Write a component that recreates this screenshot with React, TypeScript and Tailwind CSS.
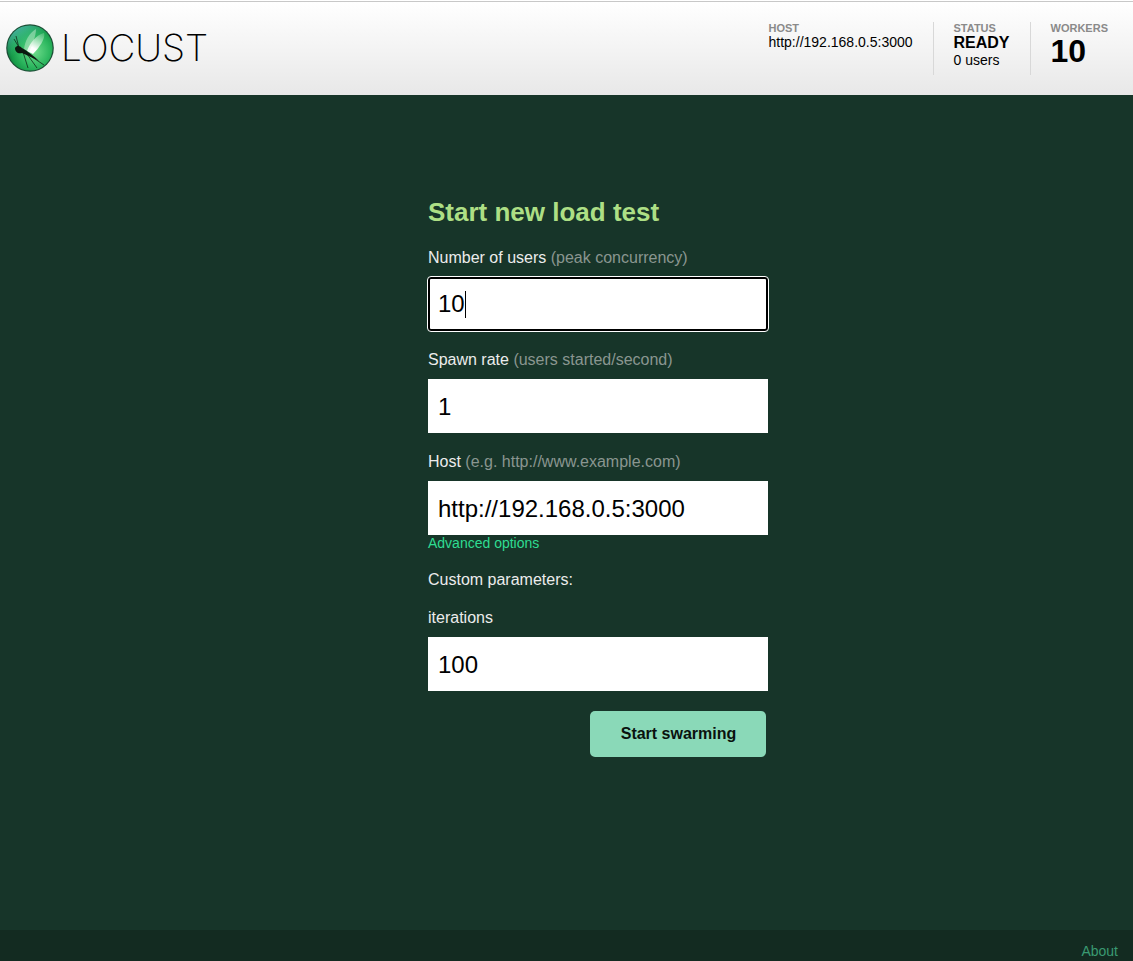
import React from 'react';

const Logo: React.FC = () => (
  <svg width="48" height="48" viewBox="0 0 48 48" className="shrink-0">
    <defs>
      <radialGradient id="globe" cx="0.6" cy="0.58" r="0.6">
        <stop offset="0" stopColor="#6fdc8c" />
        <stop offset="0.55" stopColor="#2eb860" />
        <stop offset="0.85" stopColor="#169a48" />
        <stop offset="1" stopColor="#0c7038" />
      </radialGradient>
      <linearGradient id="sky" x1="0.1" y1="0" x2="0.55" y2="0.7">
        <stop offset="0" stopColor="#5cc8c8" />
        <stop offset="0.7" stopColor="#3cc080" stopOpacity="0" />
      </linearGradient>
      <linearGradient id="wing" x1="0.8" y1="0" x2="0.3" y2="1">
        <stop offset="0" stopColor="#a8e4bc" stopOpacity="0.35" />
        <stop offset="0.75" stopColor="#ffffff" />
      </linearGradient>
    </defs>
    <circle cx="24" cy="24" r="23.8" fill="#1d4d36" />
    <circle cx="24" cy="24" r="22.6" fill="url(#globe)" />
    <circle cx="24" cy="24" r="22.6" fill="url(#sky)" />
    <path d="M21 27 C24 19 30 11 38 9 C40 14 33 24 27 30 Z" fill="url(#wing)" />
    <path d="M18 25 C19 17 23 9 30 5 C30 11 27 20 23 28 Z" fill="#d8f2dc" opacity="0.45" />
    <path d="M9 24 C11 21 14 22 16 24 C21 27 28 32 33 37 C27 34 21 31 16 29 C12 30 9 28 9 24 Z" fill="#0b1a10" />
    <path d="M10 12 L13 24 M8 15 L14 25 M17 28 L22 44 M21 30 L31 44 M26 33 L38 41" stroke="#0b1a10" strokeWidth="0.7" fill="none" />
  </svg>
);

const Stat: React.FC<{ label: string; children: React.ReactNode; className?: string }> = ({ label, children, className }) => (
  <div className={className}>
    <div className="text-[11px] leading-[12px] font-bold text-[#8a8a8a] uppercase">{label}</div>
    {children}
  </div>
);

const Field: React.FC<{ label: string; hint?: string; value: string; focused?: boolean }> = ({ label, hint, value, focused }) => (
  <div>
    <label className="block text-base leading-[20px] text-[#ececec]">
      {label} {hint && <span className="text-[#8a9690]">{hint}</span>}
    </label>
    <div
      className={
        'mt-[9px] h-[54px] w-[340px] bg-white flex items-center text-[24px] text-black ' +
        (focused ? 'rounded-[3px] outline-1 outline-white border-2 border-black pl-[8px] pr-[8px]' : 'px-[10px] pt-[2px]')
      }
    >
      <span>{value}</span>
      {focused && <span className="w-px h-[27px] bg-black" />}
    </div>
  </div>
);

const App: React.FC = () => {
  return (
    <div className="flex flex-col h-[961px] bg-[#173529] font-['Liberation_Sans',Arial,sans-serif] overflow-hidden">
      <header className="h-[95px] shrink-0 bg-white pt-px">
        <div className="h-full border-t border-[#c8c8c8] bg-gradient-to-b from-white to-[#e8e8e8] flex justify-between">
          <div className="flex items-center pl-[6px] pb-[2px] gap-[7px]">
            <Logo />
            <span className="font-['Inter',sans-serif] font-[200] text-[37px] tracking-[-0.1px] text-black">LOCUST</span>
          </div>
          <div className="flex pt-[20px] pr-[25px] text-black">
            <Stat label="Host" className="pr-[20px] h-[53px]">
              <div className="text-sm leading-[16px]">http://192.168.0.5:3000</div>
            </Stat>
            <Stat label="Status" className="border-l border-[#d8d8d8] pl-[20px] pr-[20px] h-[53px]">
              <div className="text-base leading-[18px] font-bold">READY</div>
              <div className="text-sm leading-[16px]">0 users</div>
            </Stat>
            <Stat label="Workers" className="border-l border-[#d8d8d8] pl-[20px] h-[53px]">
              <div className="text-[32px] leading-[34px] font-bold">10</div>
            </Stat>
          </div>
        </div>
      </header>

      <main className="flex-1 flex justify-center">
        <div className="w-[340px] pt-[102px] ml-[63px]">
          <h2 className="text-[26px] leading-[30px] font-bold text-[#addf85]">Start new load test</h2>
          <div className="mt-[21px] flex flex-col gap-[19px]">
            <Field label="Number of users" hint="(peak concurrency)" value="10" focused />
            <Field label="Spawn rate" hint="(users started/second)" value="1" />
            <Field label="Host" hint="(e.g. http://www.example.com)" value="http://192.168.0.5:3000" />
          </div>
          <a className="block text-sm leading-[16px] text-[#2fdc92]">Advanced options</a>
          <p className="mt-[19px] text-base leading-[20px] text-[#ececec]">Custom parameters:</p>
          <div className="mt-[18px]">
            <Field label="iterations" value="100" />
          </div>
          <div className="mt-[20px] flex justify-end pr-[2px]">
            <button className="w-[176px] h-[46px] pl-px rounded-[5px] bg-[#8ad9b8] text-base font-bold text-[#0a120e]">Start swarming</button>
          </div>
        </div>
      </main>

      <footer className="h-[31px] shrink-0 bg-[#132b21] flex justify-end items-end pr-[15px] pb-[2px]">
        <a className="text-sm leading-[16px] text-[#3a9a72]">About</a>
      </footer>
    </div>
  );
};

export default App;
